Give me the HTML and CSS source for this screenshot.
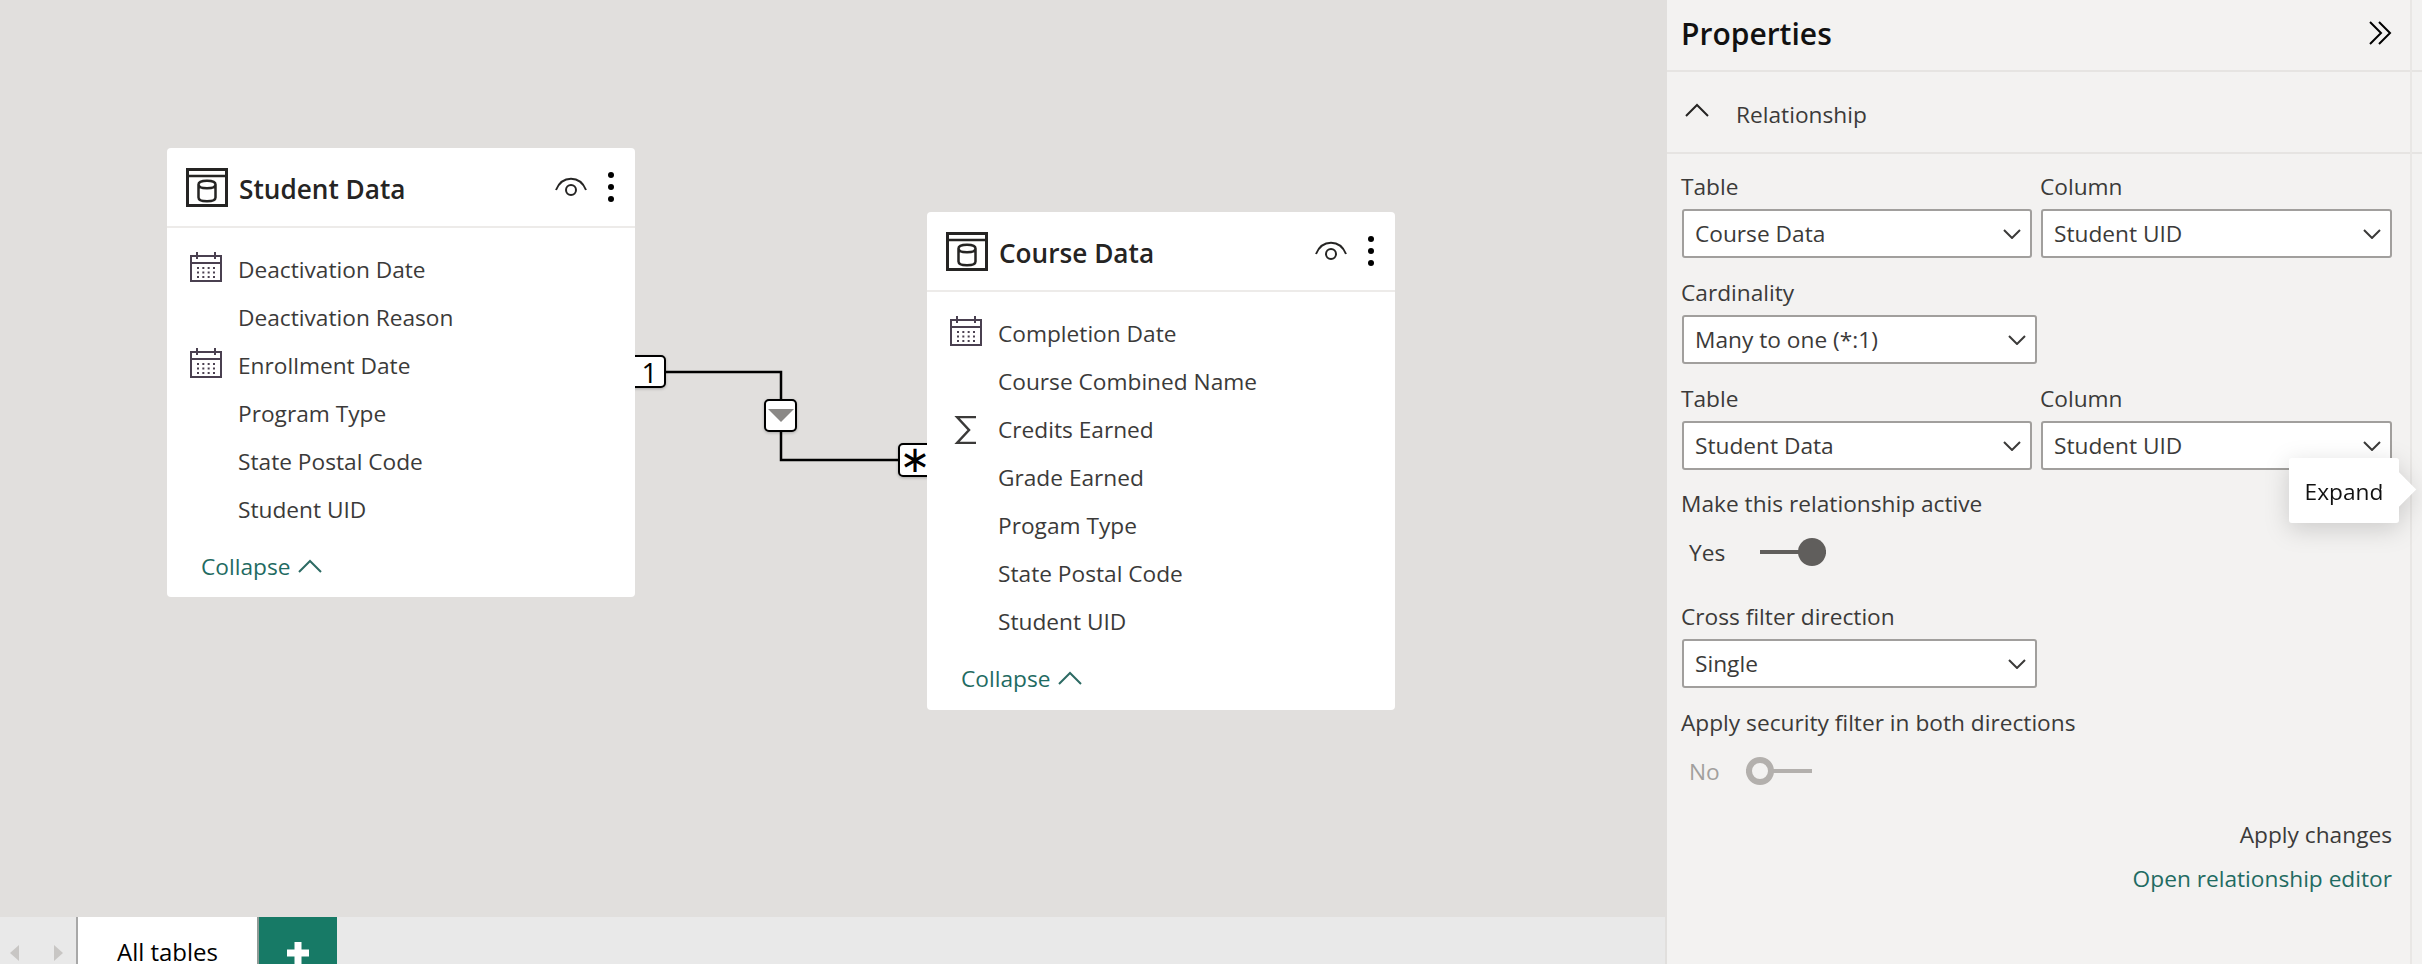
FILE: index.html
```html
<!DOCTYPE html>
<html lang="en">
<head>
    <meta charset="UTF-8">
    <title>Model view</title>
    <link rel="stylesheet" href="styles.css">
</head>
<body>
<svg class="defs" width="0" height="0">
    <symbol id="i-table" viewBox="0 0 42 39">
        <path d="M1.5 1.5h39v36h-39z" fill="none" stroke="#252423" stroke-width="3"/>
        <path d="M0 8h42" stroke="#252423" stroke-width="2.5"/>
        <path d="M12.5 16.5c0-5 17-5 17 0v13c0 5-17 5-17 0z M12.5 16.5c0 5 17 5 17 0" fill="none" stroke="#252423" stroke-width="2.5"/>
    </symbol>
    <symbol id="i-eye" viewBox="0 0 32 20">
        <path d="M1 13C7 -2 25 -2 31 13" fill="none" stroke="#252423" stroke-width="2"/>
        <circle cx="16" cy="13" r="5" fill="none" stroke="#252423" stroke-width="2"/>
    </symbol>
    <symbol id="i-more" viewBox="0 0 8 32">
        <circle cx="4" cy="4" r="3"/>
        <circle cx="4" cy="16" r="3"/>
        <circle cx="4" cy="28" r="3"/>
    </symbol>
    <symbol id="i-cal" viewBox="0 0 32 30">
        <path d="M1 4h30v25H1zM1 11h30M7 0v7M25 0v7" fill="none" stroke="#4a4050" stroke-width="2"/>
        <path d="M7 16h18M7 20.500h18M7 25h18" stroke="#4a4050" stroke-width="2" stroke-dasharray="2 3.330"/>
    </symbol>
    <symbol id="i-sum" viewBox="0 0 20 28">
        <path d="M20 1H1l12 13L1 27h19" fill="none" stroke="#3b3a39" stroke-width="2.500"/>
    </symbol>
    <symbol id="i-up" viewBox="0 0 24 14">
        <path d="M1 13L12 2l11 11" fill="none" stroke="currentColor" stroke-width="2"/>
    </symbol>
    <symbol id="i-down" viewBox="0 0 18 10">
        <path d="M1 1l8 8 8-8" fill="none" stroke="#3b3a39" stroke-width="2"/>
    </symbol>
</svg>

<div class="app">
    <div class="workspace">
        <div class="canvas">
            <svg class="lines" width="1667" height="917">
                <path d="M660 372H781V460H905" fill="none" stroke="#000" stroke-width="2.500"/>
            </svg>
            <div class="rel-box rel-one">1</div>
            <div class="rel-box rel-filter"><span class="tri"></span></div>
            <div class="rel-box rel-many">∗</div>

            <div class="card card-student">
                <div class="card-head">
                    <svg class="tbl-icon"><use href="#i-table"/></svg>
                    <span class="card-title">Student Data</span>
                    <svg class="eye"><use href="#i-eye"/></svg>
                    <svg class="more"><use href="#i-more"/></svg>
                </div>
                <ul class="fields">
                    <li><svg class="fld-icon"><use href="#i-cal"/></svg><span>Deactivation Date</span></li>
                    <li><span class="fld-icon"></span><span>Deactivation Reason</span></li>
                    <li><svg class="fld-icon"><use href="#i-cal"/></svg><span>Enrollment Date</span></li>
                    <li><span class="fld-icon"></span><span>Program Type</span></li>
                    <li><span class="fld-icon"></span><span>State Postal Code</span></li>
                    <li><span class="fld-icon"></span><span>Student UID</span></li>
                </ul>
                <div class="collapse">Collapse <svg class="chev-up"><use href="#i-up"/></svg></div>
            </div>

            <div class="card card-course">
                <div class="card-head">
                    <svg class="tbl-icon"><use href="#i-table"/></svg>
                    <span class="card-title">Course Data</span>
                    <svg class="eye"><use href="#i-eye"/></svg>
                    <svg class="more"><use href="#i-more"/></svg>
                </div>
                <ul class="fields">
                    <li><svg class="fld-icon"><use href="#i-cal"/></svg><span>Completion Date</span></li>
                    <li><span class="fld-icon"></span><span>Course Combined Name</span></li>
                    <li><svg class="fld-icon sum"><use href="#i-sum"/></svg><span>Credits Earned</span></li>
                    <li><span class="fld-icon"></span><span>Grade Earned</span></li>
                    <li><span class="fld-icon"></span><span>Progam Type</span></li>
                    <li><span class="fld-icon"></span><span>State Postal Code</span></li>
                    <li><span class="fld-icon"></span><span>Student UID</span></li>
                </ul>
                <div class="collapse">Collapse <svg class="chev-up"><use href="#i-up"/></svg></div>
            </div>
        </div>
        <div class="tabbar">
            <div class="tab-nav">
                <span class="nav-left"></span>
                <span class="nav-right"></span>
            </div>
            <div class="tab">All tables</div>
            <div class="tab-add">
                <svg width="22" height="22" viewBox="0 0 22 22"><path d="M11 0v22M0 11h22" stroke="#fff" stroke-width="7"/></svg>
            </div>
        </div>
    </div>

    <div class="panel">
        <div class="panel-head">
            <span class="panel-title">Properties</span>
            <svg class="chev-right" width="23" height="24" viewBox="0 0 23 24">
                <path d="M1 1l11 11L1 23M10 1l11 11-11 11" fill="none" stroke="#000" stroke-width="2"/>
            </svg>
        </div>
        <div class="section-head">
            <svg class="section-chev"><use href="#i-up"/></svg>
            <span>Relationship</span>
        </div>
        <div class="form">
            <div class="pair">
                <div>
                    <label>Table</label>
                    <div class="select"><span>Course Data</span><svg class="chev-down"><use href="#i-down"/></svg></div>
                </div>
                <div>
                    <label>Column</label>
                    <div class="select"><span>Student UID</span><svg class="chev-down"><use href="#i-down"/></svg></div>
                </div>
            </div>
            <div class="group">
                <label>Cardinality</label>
                <div class="select wide"><span>Many to one (*:1)</span><svg class="chev-down"><use href="#i-down"/></svg></div>
            </div>
            <div class="pair group">
                <div>
                    <label>Table</label>
                    <div class="select"><span>Student Data</span><svg class="chev-down"><use href="#i-down"/></svg></div>
                </div>
                <div>
                    <label>Column</label>
                    <div class="select"><span>Student UID</span><svg class="chev-down"><use href="#i-down"/></svg></div>
                </div>
            </div>
            <label class="after-select">Make this relationship active</label>
            <div class="toggle-row">
                <span class="toggle-yes">Yes</span>
                <span class="toggle on"></span>
            </div>
            <div class="group-lg">
                <label>Cross filter direction</label>
                <div class="select wide"><span>Single</span><svg class="chev-down"><use href="#i-down"/></svg></div>
            </div>
            <label class="group">Apply security filter in both directions</label>
            <div class="toggle-row off">
                <span class="toggle-no">No</span>
                <span class="toggle"></span>
            </div>
            <div class="actions">
                <div class="apply">Apply changes</div>
                <div class="open-editor">Open relationship editor</div>
            </div>
        </div>
        <div class="tooltip">Expand</div>
    </div>
</div>
</body>
</html>
```

FILE: styles.css
```css
html, body, ul, li {
    margin: 0;
    padding: 0;
    list-style: none;
}

body {
    width: 2422px;
    height: 964px;
    overflow: hidden;
    font-family: "Open Sans", "Noto Sans", sans-serif;
    font-size: 22.7px;
    color: #3b3a39;
}

.defs {
    position: absolute;
}

.app {
    display: flex;
    height: 964px;
}

.workspace {
    width: 1667px;
    display: flex;
    flex-direction: column;
    background: #e1dfdd;
}

.canvas {
    flex: 1;
    position: relative;
}

.lines {
    position: absolute;
    left: 0;
    top: 0;
}

/* relationship markers */
.rel-box {
    position: absolute;
    box-sizing: border-box;
    background: #fff;
    border: 2px solid #000;
    border-radius: 5px;
    box-shadow: 0 1px 3px rgba(0, 0, 0, .25);
    color: #000;
    display: flex;
    align-items: center;
    justify-content: center;
}

.rel-one {
    left: 625px;
    top: 355px;
    width: 41px;
    height: 33px;
    padding-left: 8px;
    font-size: 28px;
}

.rel-filter {
    left: 764px;
    top: 399px;
    width: 33px;
    height: 33px;
}

.tri {
    width: 0;
    height: 0;
    border-left: 13px solid transparent;
    border-right: 13px solid transparent;
    border-top: 13px solid #8a8886;
}

.rel-many {
    left: 898px;
    top: 443px;
    width: 40px;
    height: 34px;
    font-family: "DejaVu Sans", sans-serif;
    font-size: 37px;
    line-height: 30px;
    padding-right: 6px;
}

/* table cards */
.card {
    position: absolute;
    width: 468px;
    background: #fff;
    border-radius: 4px;
}

.card-student {
    left: 167px;
    top: 148px;
    height: 449px;
}

.card-course {
    left: 927px;
    top: 212px;
    height: 498px;
}

.card-head {
    height: 78px;
    padding-left: 19px;
    display: flex;
    align-items: center;
    border-bottom: 2px solid #edebe9;
}

.tbl-icon {
    width: 42px;
    height: 39px;
    margin-right: 11px;
}

.card-title {
    width: 316px;
    padding-top: 3px;
    font-size: 26.2px;
    font-weight: 600;
    color: #252423;
}

.eye {
    width: 32px;
    height: 20px;
    margin-right: 20px;
}

.more {
    width: 8px;
    height: 32px;
}

.fields {
    padding-top: 18px;
}

.fields li {
    height: 48px;
    padding-left: 23px;
    display: flex;
    align-items: center;
}

.fields li > span:last-child {
    margin-top: -1px;
}

.fld-icon {
    width: 32px;
    height: 30px;
    margin-right: 16px;
    margin-top: -6px;
}

.fld-icon.sum {
    height: 28px;
    margin-top: 0;
}

.collapse {
    height: 48px;
    margin-top: 8px;
    padding-left: 34px;
    display: flex;
    align-items: center;
    gap: 8px;
    color: #1f6b62;
}

.chev-up {
    width: 24px;
    height: 14px;
    color: #2d6b64;
}

/* tab strip */
.tabbar {
    height: 47px;
    margin-right: 2px;
    display: flex;
    background: #e9e9e9;
    overflow: hidden;
}

.tab-nav {
    width: 76px;
    position: relative;
}

.nav-left,
.nav-right {
    position: absolute;
    top: 28px;
    border-top: 8px solid transparent;
    border-bottom: 8px solid transparent;
}

.nav-left {
    left: 10px;
    border-right: 9px solid #c8c6c4;
}

.nav-right {
    left: 54px;
    border-left: 9px solid #c8c6c4;
}

.tab {
    box-sizing: border-box;
    width: 183px;
    height: 47px;
    padding-top: 23px;
    border-left: 2px solid #a8a8a8;
    border-right: 2px solid #8f9b96;
    background: #fff;
    color: #000;
    text-align: center;
    font-size: 24px;
    line-height: 24px;
}

.tab-add {
    width: 78px;
    background: #177a66;
    display: flex;
    justify-content: center;
    padding-top: 25px;
}

/* properties panel */
.panel {
    flex: 1;
    position: relative;
    background: #f3f2f1;
}

.panel::after {
    content: "";
    position: absolute;
    left: 743px;
    top: 0;
    bottom: 0;
    width: 2px;
    background: #e9e7e5;
}

.panel-head {
    box-sizing: border-box;
    height: 72px;
    padding: 0 30px 4px 14px;
    display: flex;
    align-items: center;
    justify-content: space-between;
    border-bottom: 2px solid #e6e4e2;
}

.panel-title {
    font-size: 30px;
    font-weight: 600;
    color: #111;
}

.section-head {
    box-sizing: border-box;
    height: 82px;
    padding: 4px 0 0 18px;
    display: flex;
    align-items: center;
    border-bottom: 2px solid #e6e4e2;
}

.section-chev {
    width: 24px;
    height: 14px;
    margin-right: 27px;
    margin-top: -8px;
    color: #252423;
}

.form {
    padding: 17px 30px 0 15px;
}

label {
    display: block;
    height: 32px;
    line-height: 32px;
    margin: 0 0 6px -1px;
}

.pair {
    display: grid;
    grid-template-columns: 350px 351px;
    column-gap: 9px;
}

.group {
    margin-top: 19px;
}

.group-lg {
    margin-top: 35px;
}

.after-select {
    margin-top: 18px;
    margin-bottom: 0;
}

.select {
    box-sizing: border-box;
    height: 49px;
    padding: 0 9px 0 11px;
    display: flex;
    align-items: center;
    justify-content: space-between;
    background: #fff;
    border: 2px solid #a19f9d;
    border-radius: 3px;
}

.select.wide {
    width: 355px;
}

.chev-down {
    width: 18px;
    height: 10px;
}

.toggle-row {
    height: 28px;
    margin-top: 18px;
    padding-left: 7px;
    display: flex;
    align-items: center;
}

.toggle-row.off {
    color: #a19f9d;
}

.toggle-yes {
    width: 71px;
}

.toggle-no {
    width: 57px;
}

.toggle {
    position: relative;
    width: 66px;
    height: 4px;
    background: #b3b0ad;
}

.toggle::after {
    content: "";
    position: absolute;
    left: 0;
    top: -12px;
    box-sizing: border-box;
    width: 28px;
    height: 28px;
    border: 6px solid #b3b0ad;
    border-radius: 50%;
    background: #f3f2f1;
}

.toggle.on {
    background: #605e5c;
}

.toggle.on::after {
    left: auto;
    right: 0;
    border: 0;
    background: #605e5c;
}

.actions {
    margin-top: 34px;
    text-align: right;
    line-height: 32px;
}

.open-editor {
    margin-top: 12px;
    color: #1f6b62;
}

.tooltip {
    box-sizing: border-box;
    position: absolute;
    z-index: 1;
    left: 622px;
    top: 458px;
    width: 110px;
    height: 65px;
    padding-top: 2px;
    display: flex;
    align-items: center;
    justify-content: center;
    background: #fff;
    border-radius: 3px;
    color: #111;
    filter: drop-shadow(0 6px 12px rgba(0, 0, 0, .16));
}

.tooltip::after {
    content: "";
    position: absolute;
    right: -12px;
    top: 19px;
    width: 25px;
    height: 25px;
    background: #fff;
    transform: rotate(45deg);
}
```
